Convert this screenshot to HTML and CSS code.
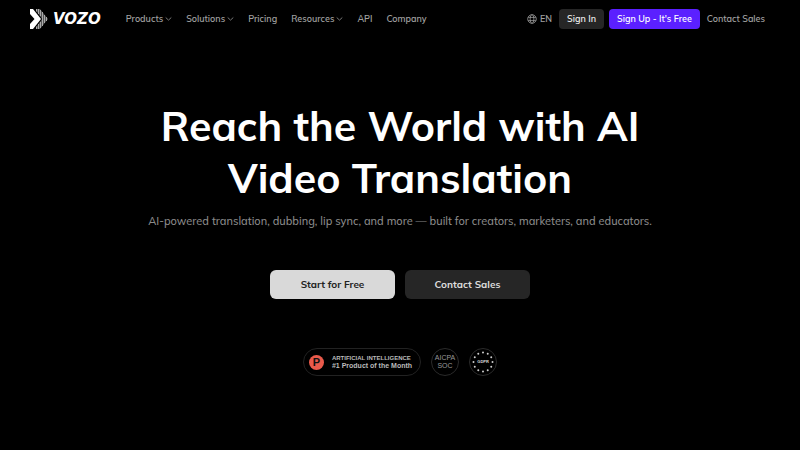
FILE: index.html
```html
<!DOCTYPE html>
<html lang="en">
<head>
<meta charset="utf-8">
<meta name="viewport" content="width=device-width, initial-scale=1">
<title>Vozo</title>
<link rel="stylesheet" href="styles.css">
</head>
<body>
<header class="header">
  <a class="logo" href="#">
    <svg class="logo-mark" viewBox="0 0 18 20" aria-hidden="true">
      <path fill="#fff" d="M0 0h3l8 10-8 10H0v-5l4.500-5L0 5z"/>
      <path fill="#555" d="M6 0h4l8 10-8 10H6v-1.500L12 10 6 1.500z"/>
      <path fill="none" stroke="#aaa" d="M6.500 0v2.500M8.500 0v5M10.500 1v6M12.500 3v14M14.500 6v8M16.500 8v4M6.500 17.500V20M8.500 15v5M10.500 13v6"/>
    </svg>
    <span class="logo-name">VOZO</span>
  </a>
  <nav class="nav">
    <button class="nav-item" type="button">Products <svg class="chevron" viewBox="0 0 7 6" aria-hidden="true"><path d="M.7 1.500l2.800 2.600 2.800-2.600"/></svg></button>
    <button class="nav-item" type="button">Solutions <svg class="chevron" viewBox="0 0 7 6" aria-hidden="true"><path d="M.7 1.500l2.800 2.600 2.800-2.600"/></svg></button>
    <a class="nav-item" href="#">Pricing</a>
    <button class="nav-item" type="button">Resources <svg class="chevron" viewBox="0 0 7 6" aria-hidden="true"><path d="M.7 1.500l2.800 2.600 2.800-2.600"/></svg></button>
    <a class="nav-item" href="#">API</a>
    <a class="nav-item" href="#">Company</a>
  </nav>
  <div class="actions">
    <button class="nav-item" type="button">
      <svg class="globe" viewBox="0 0 10 10" aria-hidden="true"><circle cx="5" cy="5" r="4.300"/><ellipse cx="5" cy="5" rx="1.900" ry="4.300"/><path d="M1.100 3.400h7.800M1.100 6.600h7.800"/></svg>
      EN
    </button>
    <a class="pill" href="#">Sign In</a>
    <a class="pill pill-primary" href="#">Sign Up - It's Free</a>
    <a class="nav-item contact" href="#">Contact Sales</a>
  </div>
</header>
<main class="hero">
  <h1 class="title">Reach the World with AI<br>Video Translation</h1>
  <p class="subtitle">AI-powered translation, dubbing, lip sync, and more — built for creators, marketers, and educators.</p>
  <div class="cta">
    <a class="button button-light" href="#">Start for Free</a>
    <a class="button" href="#">Contact Sales</a>
  </div>
  <div class="badges">
    <div class="award">
      <span class="award-icon">P</span>
      <span class="award-text"><span class="award-topic">ARTIFICIAL INTELLIGENCE</span><span>#1 Product of the Month</span></span>
    </div>
    <div class="seal seal-soc"><span>AICPA</span><span>SOC</span></div>
    <div class="seal seal-gdpr">
      <svg class="stars" viewBox="0 0 28 28" aria-hidden="true"><circle cx="14" cy="14" r="9.500" pathLength="120"/></svg>
      <span>GDPR</span>
    </div>
  </div>
</main>
</body>
</html>
```
FILE: styles.css
```css
* { box-sizing: border-box; }
body {
  margin: 0;
  background: #000;
  color: #fff;
  font-family: "Mulish", "Open Sans", sans-serif;
}
a { color: inherit; text-decoration: none; }
button { padding: 0; border: 0; background: none; font: inherit; cursor: pointer; }
.header {
  display: flex;
  align-items: center;
  height: 38px;
  padding: 0 35px 0 30px;
}
.logo { display: flex; align-items: center; gap: 5px; margin-right: 25px; }
.logo-mark { width: 18px; height: 20px; }
.logo-name { font: italic bold 15px/20px "DejaVu Sans", sans-serif; }
.nav { display: flex; align-items: center; gap: 14px; }
.nav-item {
  display: flex;
  align-items: center;
  gap: 2px;
  color: #a0a0a0;
  font-size: 9px;
  font-weight: 600;
  line-height: 20px;
  white-space: nowrap;
}
.chevron { width: 7px; height: 6px; fill: none; stroke: #777; }
.globe { width: 10px; height: 10px; margin-right: 1px; fill: none; stroke: #999; stroke-width: .8; }
.actions { display: flex; align-items: center; gap: 5px; margin-left: auto; }
.pill {
  margin-left: 2px;
  padding: 0 8px;
  border-radius: 4px;
  background: #262626;
  color: #eee;
  font-size: 9px;
  font-weight: 600;
  line-height: 20px;
  white-space: nowrap;
}
.pill-primary { margin-left: 0; background: #5b20ff; color: #fff; }
.contact { margin-left: 2px; }
.hero {
  display: flex;
  flex-direction: column;
  align-items: center;
  padding: 62px 20px 0;
  text-align: center;
}
.title { margin: 0; font-size: 41px; font-weight: 700; line-height: 52px; }
.subtitle { margin: 9px 0 0; color: #8a8a8a; font-size: 11px; font-weight: 500; line-height: 16px; }
.cta { display: flex; gap: 10px; margin-top: 41px; }
.button {
  width: 125px;
  border-radius: 6px;
  background: #262626;
  color: #ddd;
  font-size: 10px;
  font-weight: 700;
  line-height: 29px;
}
.button-light { background: #d9d9d9; color: #222; }
.badges { display: flex; gap: 10px; margin-top: 49px; color: #bbb; }
.award {
  display: flex;
  align-items: center;
  gap: 8px;
  height: 28px;
  padding: 0 8px 0 5px;
  border: 1px solid #222;
  border-radius: 14px;
  font: bold 7px/7px "Liberation Sans", sans-serif;
  text-align: left;
}
.award-text { display: flex; flex-direction: column; }
.award-topic { font-size: 6px; }
.award-icon {
  width: 15px;
  border-radius: 50%;
  background: #e95a4b;
  color: #111;
  font-size: 11px;
  line-height: 15px;
  text-align: center;
}
.seal {
  position: relative;
  display: flex;
  flex-direction: column;
  align-items: center;
  justify-content: center;
  width: 28px;
  height: 28px;
  border: 1px solid #2a2a2a;
  border-radius: 50%;
}
.seal-soc { font: 7px/8px "Liberation Sans", sans-serif; color: #999; }
.seal-gdpr { font: bold 4px/6px "Liberation Sans", sans-serif; color: #ddd; }
.stars {
  position: absolute;
  inset: -1px;
  fill: none;
  stroke: #ccc;
  stroke-width: 2;
  stroke-linecap: round;
  stroke-dasharray: 0 10;
}
```
